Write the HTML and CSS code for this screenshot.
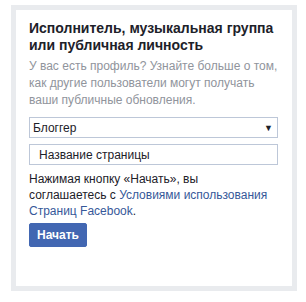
FILE: index.html
```html
<!DOCTYPE html>
<html>
<head>
  <meta charset="UTF-8">
  <title>Создать страницу</title>
  <link rel="stylesheet" href="styles.css">
</head>
<body>
  <div class="card">
    <h2 class="title">Исполнитель, музыкальная группа или публичная личность</h2>
    <p class="desc">У вас есть профиль? Узнайте больше о том, как другие пользователи могут получать ваши публичные обновления.</p>

    <div class="select">
      <span>Блоггер</span>
      <span class="arrow">&#9660;</span>
    </div>
    <input type="text" class="name-input" placeholder="Название страницы">

    <p class="terms">Нажимая кнопку «Начать», вы соглашаетесь с <a href="#">Условиями использования Страниц Facebook</a>.</p>
    <button class="start">Начать</button>
  </div>
</body>
</html>
```

FILE: styles.css
```css
body {
  margin: 0;
  background: #fff;
  font-family: "Liberation Sans", Arial, sans-serif;
}

.card {
  margin: 5px 0 0 11px;
  width: 249px;
  height: 276px;
  border: 5px solid #e9ebee;
  padding: 0 14px 0 13px;
  box-sizing: content-box;
}

.title {
  margin: 10px 0 0;
  font-size: 14px;
  line-height: 17px;
  font-weight: bold;
  color: #1d2129;
}

.desc {
  margin: 4px 0 0;
  font-size: 12px;
  line-height: 17px;
  color: #90949c;
}

.select {
  margin-top: 8px;
  height: 19px;
  border: 1px solid #bdc7d8;
  display: flex;
  align-items: center;
  justify-content: space-between;
  padding: 0 4px 0 3px;
  font-size: 12px;
  color: #1d2129;
}

.arrow {
  font-size: 9px;
}

.name-input {
  display: block;
  margin-top: 6px;
  width: 100%;
  height: 21px;
  box-sizing: border-box;
  border: 1px solid #bdc7d8;
  padding: 0 9px;
  font-family: inherit;
  font-size: 12px;
}

.name-input::placeholder {
  color: #1d2129;
  opacity: 1;
}

.terms {
  margin: 6px 0 0;
  font-size: 12px;
  line-height: 16px;
  color: #1d2129;
}

.terms a {
  color: #365899;
  text-decoration: none;
}

.start {
  display: block;
  margin-top: 4px;
  height: 24px;
  padding: 0 7px;
  border: 1px solid #4267b2;
  border-radius: 2px;
  background: #4267b2;
  color: #fff;
  font-family: inherit;
  font-size: 12px;
  font-weight: bold;
}
```
